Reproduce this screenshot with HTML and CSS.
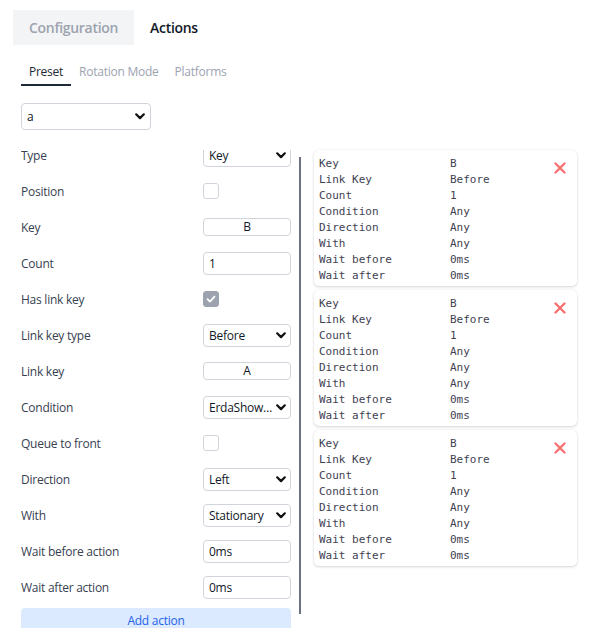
FILE: index.html
```html
<!DOCTYPE html>
<html>
<head>
<meta charset="utf-8">
<link rel="stylesheet" href="styles.css">
</head>
<body>
<div class="tabs">
  <div class="tab tab-inactive">Configuration</div>
  <div class="tab tab-active">Actions</div>
</div>
<div class="subtabs">
  <div class="subtab subtab-active">Preset</div>
  <div class="subtab">Rotation Mode</div>
  <div class="subtab">Platforms</div>
</div>
<div class="select preset-select"><span class="value">a</span><svg class="chev" viewBox="0 0 10 7"><path d="M1.2 1.3 5 5.1 8.8 1.3" /></svg></div>

<div class="main">
  <div class="left">
    <div class="rows">
      <div class="row"><span class="label">Type</span><div class="select ctl"><span class="value">Key</span><svg class="chev" viewBox="0 0 10 7"><path d="M1.2 1.3 5 5.1 8.8 1.3" /></svg></div></div>
      <div class="row"><span class="label">Position</span><div class="ctl"><span class="checkbox"></span></div></div>
      <div class="row"><span class="label">Key</span><div class="keybtn ctl">B</div></div>
      <div class="row"><span class="label">Count</span><div class="input ctl">1</div></div>
      <div class="row"><span class="label">Has link key</span><div class="ctl"><span class="checkbox checked"><svg viewBox="0 0 16 16"><path d="M4 8.2 6.8 11 12 5.2" /></svg></span></div></div>
      <div class="row"><span class="label">Link key type</span><div class="select ctl"><span class="value">Before</span><svg class="chev" viewBox="0 0 10 7"><path d="M1.2 1.3 5 5.1 8.8 1.3" /></svg></div></div>
      <div class="row"><span class="label">Link key</span><div class="keybtn ctl">A</div></div>
      <div class="row"><span class="label">Condition</span><div class="select ctl"><span class="value">ErdaShowerOffCooldown</span><svg class="chev" viewBox="0 0 10 7"><path d="M1.2 1.3 5 5.1 8.8 1.3" /></svg></div></div>
      <div class="row"><span class="label">Queue to front</span><div class="ctl"><span class="checkbox"></span></div></div>
      <div class="row"><span class="label">Direction</span><div class="select ctl"><span class="value">Left</span><svg class="chev" viewBox="0 0 10 7"><path d="M1.2 1.3 5 5.1 8.8 1.3" /></svg></div></div>
      <div class="row"><span class="label">With</span><div class="select ctl"><span class="value">Stationary</span><svg class="chev" viewBox="0 0 10 7"><path d="M1.2 1.3 5 5.1 8.8 1.3" /></svg></div></div>
      <div class="row"><span class="label">Wait before action</span><div class="input ctl">0ms</div></div>
      <div class="row"><span class="label">Wait after action</span><div class="input ctl">0ms</div></div>
    </div>
    <button class="add-btn">Add action</button>
  </div>
  <div class="divider"></div>
  <div class="right">
    <div class="card">
      <div class="grid">
        <span>Key</span><span>B</span>
        <span>Link Key</span><span>Before</span>
        <span>Count</span><span>1</span>
        <span>Condition</span><span>Any</span>
        <span>Direction</span><span>Any</span>
        <span>With</span><span>Any</span>
        <span>Wait before</span><span>0ms</span>
        <span>Wait after</span><span>0ms</span>
      </div>
      <svg class="close" viewBox="0 0 12 12"><path d="M1.5 1.5 10.5 10.5M10.5 1.5 1.5 10.5" /></svg>
    </div>
    <div class="card">
      <div class="grid">
        <span>Key</span><span>B</span>
        <span>Link Key</span><span>Before</span>
        <span>Count</span><span>1</span>
        <span>Condition</span><span>Any</span>
        <span>Direction</span><span>Any</span>
        <span>With</span><span>Any</span>
        <span>Wait before</span><span>0ms</span>
        <span>Wait after</span><span>0ms</span>
      </div>
      <svg class="close" viewBox="0 0 12 12"><path d="M1.5 1.5 10.5 10.5M10.5 1.5 1.5 10.5" /></svg>
    </div>
    <div class="card">
      <div class="grid">
        <span>Key</span><span>B</span>
        <span>Link Key</span><span>Before</span>
        <span>Count</span><span>1</span>
        <span>Condition</span><span>Any</span>
        <span>Direction</span><span>Any</span>
        <span>With</span><span>Any</span>
        <span>Wait before</span><span>0ms</span>
        <span>Wait after</span><span>0ms</span>
      </div>
      <svg class="close" viewBox="0 0 12 12"><path d="M1.5 1.5 10.5 10.5M10.5 1.5 1.5 10.5" /></svg>
    </div>
  </div>
</div>
</body>
</html>
```

FILE: styles.css
```css
* { box-sizing: border-box; }
html, body { margin: 0; padding: 0; background: #fff; }
body {
  width: 600px;
  height: 628px;
  overflow: hidden;
  font-family: "Open Sans", "Noto Sans", sans-serif;
  font-size: 12px;
  letter-spacing: -0.25px;
  color: #374151;
}
.tabs {
  display: flex;
  margin: 10px 0 0 13px;
}
.tab {
  height: 35px;
  line-height: 35px;
  padding: 0 16px;
  font-size: 14px;
  letter-spacing: -0.3px;
  font-weight: 600;
}
.tab-inactive { background: #f3f4f6; color: #9ca3af; }
.tab-active { color: #111827; }

.subtabs {
  display: flex;
  margin: 13px 0 0 21px;
}
.subtab {
  padding: 5px 8px 3px;
  line-height: 18px;
  border-bottom: 2px solid transparent;
  color: #9ca3af;
}
.subtab-active { color: #1f2937; border-bottom-color: #1f2937; }

.select {
  display: flex;
  align-items: center;
  border: 1px solid #d1d5db;
  border-radius: 4px;
  padding: 0 4px 0 5px;
  background: #fff;
  color: #111827;
}
.select .value {
  flex: 1;
  min-width: 0;
  white-space: nowrap;
  overflow: hidden;
  text-overflow: ellipsis;
}
.chev {
  width: 10px;
  height: 7px;
  flex: none;
  margin-left: 3px;
}
.chev path { fill: none; stroke: #111; stroke-width: 2.2; stroke-linecap: round; stroke-linejoin: round; }
.preset-select {
  margin: 17px 0 0 21px;
  width: 130px;
  height: 27px;
  padding-right: 5px;
}

.main {
  display: flex;
  align-items: flex-start;
  margin-top: 20px;
}
.left {
  width: 270px;
  margin-left: 21px;
  height: 478px;
  overflow: hidden;
  flex: none;
}
.rows { margin-top: -13px; }
.row {
  display: flex;
  align-items: center;
  justify-content: space-between;
  height: 36px;
}
.label { color: #374151; }
.ctl { width: 88px; }
.select.ctl { height: 23px; }
.input {
  height: 23px;
  border: 1px solid #d1d5db;
  border-radius: 4px;
  padding: 0 5px;
  line-height: 21px;
  color: #111827;
}
.keybtn {
  height: 18px;
  border: 1px solid #d1d5db;
  border-radius: 4px;
  text-align: center;
  line-height: 16px;
  color: #111827;
}
.checkbox {
  display: block;
  width: 16px;
  height: 16px;
  border: 1px solid #d1d5db;
  border-radius: 3px;
}
.checkbox.checked {
  background: #9ca3af;
  border-color: #9ca3af;
}
.checkbox svg { display: block; width: 14px; height: 14px; }
.checkbox svg path { fill: none; stroke: #fff; stroke-width: 2; stroke-linecap: round; stroke-linejoin: round; }
.add-btn {
  display: block;
  width: 100%;
  margin-top: 3px;
  height: 28px;
  border: none;
  border-radius: 4px;
  background: #dbeafe;
  color: #2563eb;
  font-family: inherit;
  font-size: 12px;
  letter-spacing: -0.25px;
  padding: 0 0 4px;
}

.divider {
  flex: none;
  width: 2px;
  height: 457px;
  margin: 7px 0 0 8px;
  background: #6b7280;
}
.right {
  display: flex;
  flex-direction: column;
  gap: 4px;
  margin-left: 13px;
  width: 263px;
}
.card {
  position: relative;
  border-radius: 5px;
  box-shadow: 0 1px 3px rgba(0,0,0,0.16), 0 0 1px rgba(0,0,0,0.08);
  padding: 6px 5px 2px 5px;
  background: #fff;
}
.grid {
  display: grid;
  grid-template-columns: 131px 1fr;
  font-family: "DejaVu Sans Mono", monospace;
  font-size: 11px;
  letter-spacing: 0;
  line-height: 16px;
  color: #3f3f52;
}
.close {
  position: absolute;
  top: 12px;
  right: 11px;
  width: 12px;
  height: 12px;
}
.close path { fill: none; stroke: #f87171; stroke-width: 2.4; stroke-linecap: round; }
```
